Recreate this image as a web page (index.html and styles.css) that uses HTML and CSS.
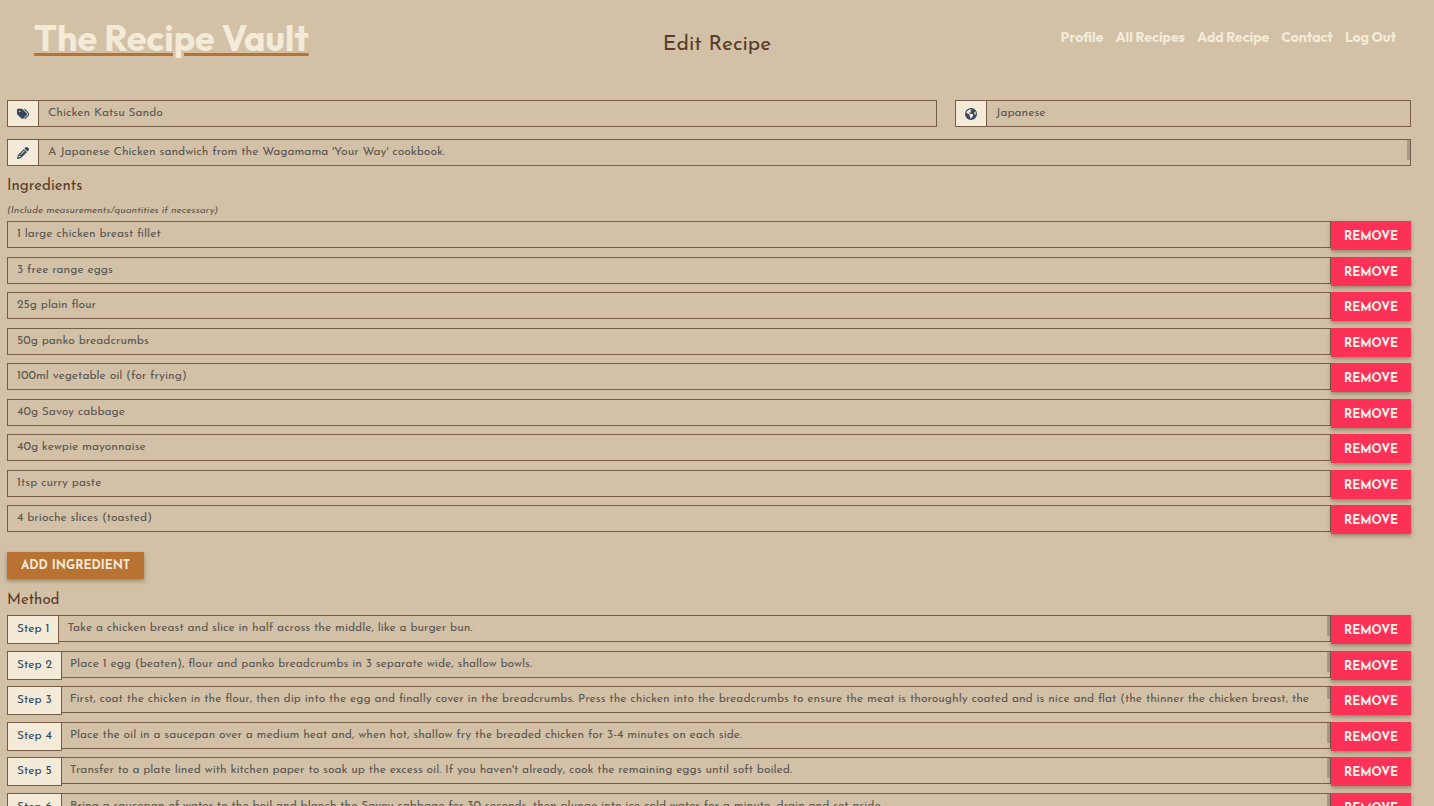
FILE: index.html
```html
<!DOCTYPE html>
<html lang="en">
<head>
<meta charset="utf-8">
<title>Edit Recipe - The Recipe Vault</title>
<link rel="stylesheet" href="styles.css">
</head>
<body>
<header class="site-header">
  <a class="brand" href="#">The Recipe Vault</a>
  <h1 class="page-title">Edit Recipe</h1>
  <nav class="site-nav">
    <a href="#">Profile</a>
    <a href="#">All Recipes</a>
    <a href="#">Add Recipe</a>
    <a href="#">Contact</a>
    <a href="#">Log Out</a>
  </nav>
</header>
<main>
<form class="recipe-form">
  <div class="details">
    <div class="field field-name">
      <label class="addon" for="name" aria-label="Recipe name"><svg class="icon" viewBox="0 0 512 512"><path d="M345 39.1L472.8 168.4c52.4 53 52.4 138.2 0 191.2L360.8 472.9c-9.3 9.4-24.5 9.5-33.9 .2s-9.5-24.5-.2-33.9L438.6 325.9c33.9-34.3 33.9-89.4 0-123.7L310.9 72.9c-9.3-9.4-9.2-24.6 .2-33.9s24.6-9.2 33.9 .2zM0 229.5V80C0 53.5 21.5 32 48 32H197.5c17 0 33.3 6.7 45.3 18.7l168 168c25 25 25 65.5 0 90.5L277.3 442.7c-25 25-65.5 25-90.5 0l-168-168C6.7 262.7 0 246.5 0 229.5zM144 144a32 32 0 1 0-64 0 32 32 0 1 0 64 0z"/></svg></label>
      <input class="control" id="name" type="text" value="Chicken Katsu Sando">
    </div>
    <div class="field field-cuisine">
      <label class="addon" for="cuisine" aria-label="Cuisine"><svg class="icon" viewBox="0 0 512 512"><path d="M57.7 193l9.4 16.4c8.3 14.5 21.9 25.2 38 29.8L163 255.7c17.2 4.9 29 20.6 29 38.5v39.9c0 11 6.2 21 16 25.9s16 14.9 16 25.9v39c0 15.6 14.9 26.9 29.9 22.6c16.1-4.6 28.6-17.5 32.7-33.8l2.8-11.2c4.2-16.9 15.2-31.4 30.3-40l8.1-4.6c15-8.5 24.2-24.5 24.2-41.7v-8.3c0-12.7-5.1-24.9-14.1-33.9l-3.9-3.9c-9-9-21.2-14.1-33.9-14.1H257c-11.1 0-22.1-2.9-31.8-8.4l-34.5-19.7c-4.3-2.5-7.6-6.5-9.2-11.2c-3.2-9.6 1.1-20 10.2-24.5l5.9-3c6.6-3.3 14.3-3.9 21.3-1.5l23.2 7.7c8.2 2.7 17.2-.4 21.9-7.5c4.7-7 4.2-16.3-1.2-22.8l-13.6-16.3c-10-12-9.9-29.5 .3-41.3l15.7-18.3c8.8-10.3 10.2-25 3.5-36.7l-2.4-4.2c-3.5-.2-6.9-.3-10.4-.3C163.1 48 84.4 108.9 57.7 193zM464 256c0-36.8-9.6-71.4-26.4-101.5L412 164.8c-15.7 6.3-23.8 23.8-18.5 39.8l16.9 50.7c3.5 10.4 12 18.3 22.6 20.9l29.1 7.3c1.2-9 1.8-18.2 1.8-27.5zM0 256a256 256 0 1 1 512 0A256 256 0 1 1 0 256z"/></svg></label>
      <input class="control" id="cuisine" type="text" value="Japanese">
    </div>
    <div class="field field-description">
      <label class="addon" for="description" aria-label="Description"><svg class="icon" viewBox="0 0 512 512"><path d="M410.3 231l11.3-11.3-33.9-33.9-62.1-62.1L291.7 89.8l-11.3 11.3-22.6 22.6L58.6 322.9c-10.4 10.4-18 23.3-22.2 37.4L1 480.7c-2.5 8.4-.2 17.5 6.1 23.7s15.3 8.5 23.7 6.1l120.3-35.4c14.1-4.2 27-11.8 37.4-22.2L387.7 253.7 410.3 231zM160 399.4l-9.1 22.7c-4 3.1-8.5 5.4-13.3 6.9L59.4 452l23-78.1c1.4-4.9 3.8-9.4 6.9-13.3l22.7-9.1v32c0 8.8 7.2 16 16 16h32zM362.7 18.7L348.3 33.2 325.7 55.8 314.3 67.1l33.9 33.9 62.1 62.1 33.9 33.9 11.3-11.3 22.6-22.6 14.5-14.5c25-25 25-65.5 0-90.5L453.3 18.7c-25-25-65.5-25-90.5 0zm-47.4 168l-144 144c-6.2 6.2-16.4 6.2-22.6 0s-6.2-16.4 0-22.6l144-144c6.2-6.2 16.4-6.2 22.6 0s6.2 16.4 0 22.6z"/></svg></label>
      <textarea class="control" id="description" rows="1">A Japanese Chicken sandwich from the Wagamama 'Your Way' cookbook.</textarea>
    </div>
  </div>

  <h2 class="section-title">Ingredients</h2>
  <p class="hint">(Include measurements/quantities if necessary)</p>
  <div class="rows">
    <div class="row"><input class="control" type="text" aria-label="Ingredient 1" value="1 large chicken breast fillet"><button class="btn btn-remove" type="button">REMOVE</button></div>
    <div class="row"><input class="control" type="text" aria-label="Ingredient 2" value="3 free range eggs"><button class="btn btn-remove" type="button">REMOVE</button></div>
    <div class="row"><input class="control" type="text" aria-label="Ingredient 3" value="25g plain flour"><button class="btn btn-remove" type="button">REMOVE</button></div>
    <div class="row"><input class="control" type="text" aria-label="Ingredient 4" value="50g panko breadcrumbs"><button class="btn btn-remove" type="button">REMOVE</button></div>
    <div class="row"><input class="control" type="text" aria-label="Ingredient 5" value="100ml vegetable oil (for frying)"><button class="btn btn-remove" type="button">REMOVE</button></div>
    <div class="row"><input class="control" type="text" aria-label="Ingredient 6" value="40g Savoy cabbage"><button class="btn btn-remove" type="button">REMOVE</button></div>
    <div class="row"><input class="control" type="text" aria-label="Ingredient 7" value="40g kewpie mayonnaise"><button class="btn btn-remove" type="button">REMOVE</button></div>
    <div class="row"><input class="control" type="text" aria-label="Ingredient 8" value="1tsp curry paste"><button class="btn btn-remove" type="button">REMOVE</button></div>
    <div class="row"><input class="control" type="text" aria-label="Ingredient 9" value="4 brioche slices (toasted)"><button class="btn btn-remove" type="button">REMOVE</button></div>
  </div>
  <button class="btn btn-add" type="button">ADD INGREDIENT</button>

  <h2 class="section-title">Method</h2>
  <div class="rows">
    <div class="row"><label class="step" for="step1">Step 1</label><textarea class="control" id="step1" rows="1">Take a chicken breast and slice in half across the middle, like a burger bun.</textarea><button class="btn btn-remove" type="button">REMOVE</button></div>
    <div class="row"><label class="step" for="step2">Step 2</label><textarea class="control" id="step2" rows="1">Place 1 egg (beaten), flour and panko breadcrumbs in 3 separate wide, shallow bowls.</textarea><button class="btn btn-remove" type="button">REMOVE</button></div>
    <div class="row"><label class="step" for="step3">Step 3</label><textarea class="control" id="step3" rows="1">First, coat the chicken in the flour, then dip into the egg and finally cover in the breadcrumbs. Press the chicken into the breadcrumbs to ensure the meat is thoroughly coated and is nice and flat (the thinner the chicken breast, the</textarea><button class="btn btn-remove" type="button">REMOVE</button></div>
    <div class="row"><label class="step" for="step4">Step 4</label><textarea class="control" id="step4" rows="1">Place the oil in a saucepan over a medium heat and, when hot, shallow fry the breaded chicken for 3-4 minutes on each side.</textarea><button class="btn btn-remove" type="button">REMOVE</button></div>
    <div class="row"><label class="step" for="step5">Step 5</label><textarea class="control" id="step5" rows="1">Transfer to a plate lined with kitchen paper to soak up the excess oil. If you haven't already, cook the remaining eggs until soft boiled.</textarea><button class="btn btn-remove" type="button">REMOVE</button></div>
    <div class="row"><label class="step" for="step6">Step 6</label><textarea class="control" id="step6" rows="1">Bring a saucepan of water to the boil and blanch the Savoy cabbage for 30 seconds, then plunge into ice cold water for a minute, drain and set aside.</textarea><button class="btn btn-remove" type="button">REMOVE</button></div>
  </div>
</form>
</main>
</body>
</html>
```
FILE: styles.css
```css
* { box-sizing: border-box; }

body {
  margin: 0;
  background: #d2c1a7;
  color: #5a3b28;
  font-family: "Josefin Sans", Lato, sans-serif;
  font-size: 12px;
}

.site-header {
  display: grid;
  grid-template-columns: 1fr auto 1fr;
  align-items: start;
  padding: 16px 34px 0;
  margin-bottom: 40px;
}

.brand,
.site-nav a {
  font-family: Outfit, Lato, sans-serif;
  font-weight: 700;
  color: #f3ead7;
}

.brand {
  font-size: 36px;
  line-height: 44px;
  text-decoration: underline 3px #b87333;
  text-underline-offset: 2px;
}

.page-title {
  margin: 14px 0 0;
  font-size: 21px;
  line-height: 30px;
  font-weight: 400;
}

.site-nav {
  display: flex;
  justify-content: flex-end;
  gap: 12px;
  padding: 11px 4px 0 0;
}

.site-nav a {
  font-size: 14px;
  line-height: 20px;
  text-decoration: none;
  white-space: nowrap;
}

.recipe-form { padding: 0 23px 0 7px; }

.details {
  display: grid;
  grid-template-columns: repeat(12, 1fr);
  gap: 12px 18px;
}

.field { display: flex; height: 27px; }
.field-name { grid-column: span 8; }
.field-cuisine { grid-column: span 4; }
.field-description { grid-column: span 12; }

.addon,
.step {
  flex: none;
  display: flex;
  align-items: center;
  justify-content: center;
  background: #f3ead7;
  border: 1px solid #795c47;
  color: #34495e;
}

.addon { width: 32px; }

.icon {
  width: 12px;
  height: 12px;
  fill: #34495e;
}

.control {
  flex: 1;
  min-width: 0;
  height: 27px;
  margin: 0;
  padding: 3px 9px 4px;
  border: 1px solid #795c47;
  border-radius: 0;
  background: transparent;
  color: #5c5853;
  font: inherit;
  line-height: 18px;
  outline: 0;
}

.addon + .control,
.step + .control { border-left: 0; }

/* Slim scroll thumb along the right edge */
textarea.control {
  resize: none;
  overflow: hidden;
  background: linear-gradient(#a89d8c, #a89d8c) right top / 3px 20px no-repeat;
}

#step3 { background-size: 3px 12px; }

.section-title {
  margin: 11px 0 0;
  font-size: 15px;
  line-height: 20px;
  font-weight: 400;
}

.hint {
  margin: 6px 0 3px;
  color: #5c5853;
  font-size: 10px;
  line-height: 15px;
  font-style: italic;
}

.row {
  display: flex;
  align-items: flex-start;
  margin-bottom: 6px;
}

.row:nth-child(odd) { margin-bottom: 7px; }

.step {
  height: 29px;
  padding: 0 9px 1px;
}

.step + .control { padding-left: 8px; }

.btn {
  border: 0;
  padding: 2px 12px 0;
  font: inherit;
  font-weight: 700;
  box-shadow: 0 2px 4px rgba(60, 40, 20, 0.4);
}

.btn-remove {
  width: 80px;
  height: 29px;
  background: #fc3157;
  color: #fff5ec;
}

.btn-add {
  height: 27px;
  margin-top: 11px;
  padding: 1px 14px 0;
  background: #b87333;
  color: #f3ead7;
}

.btn-add + .section-title { margin: 12px 0 4px; }
```
